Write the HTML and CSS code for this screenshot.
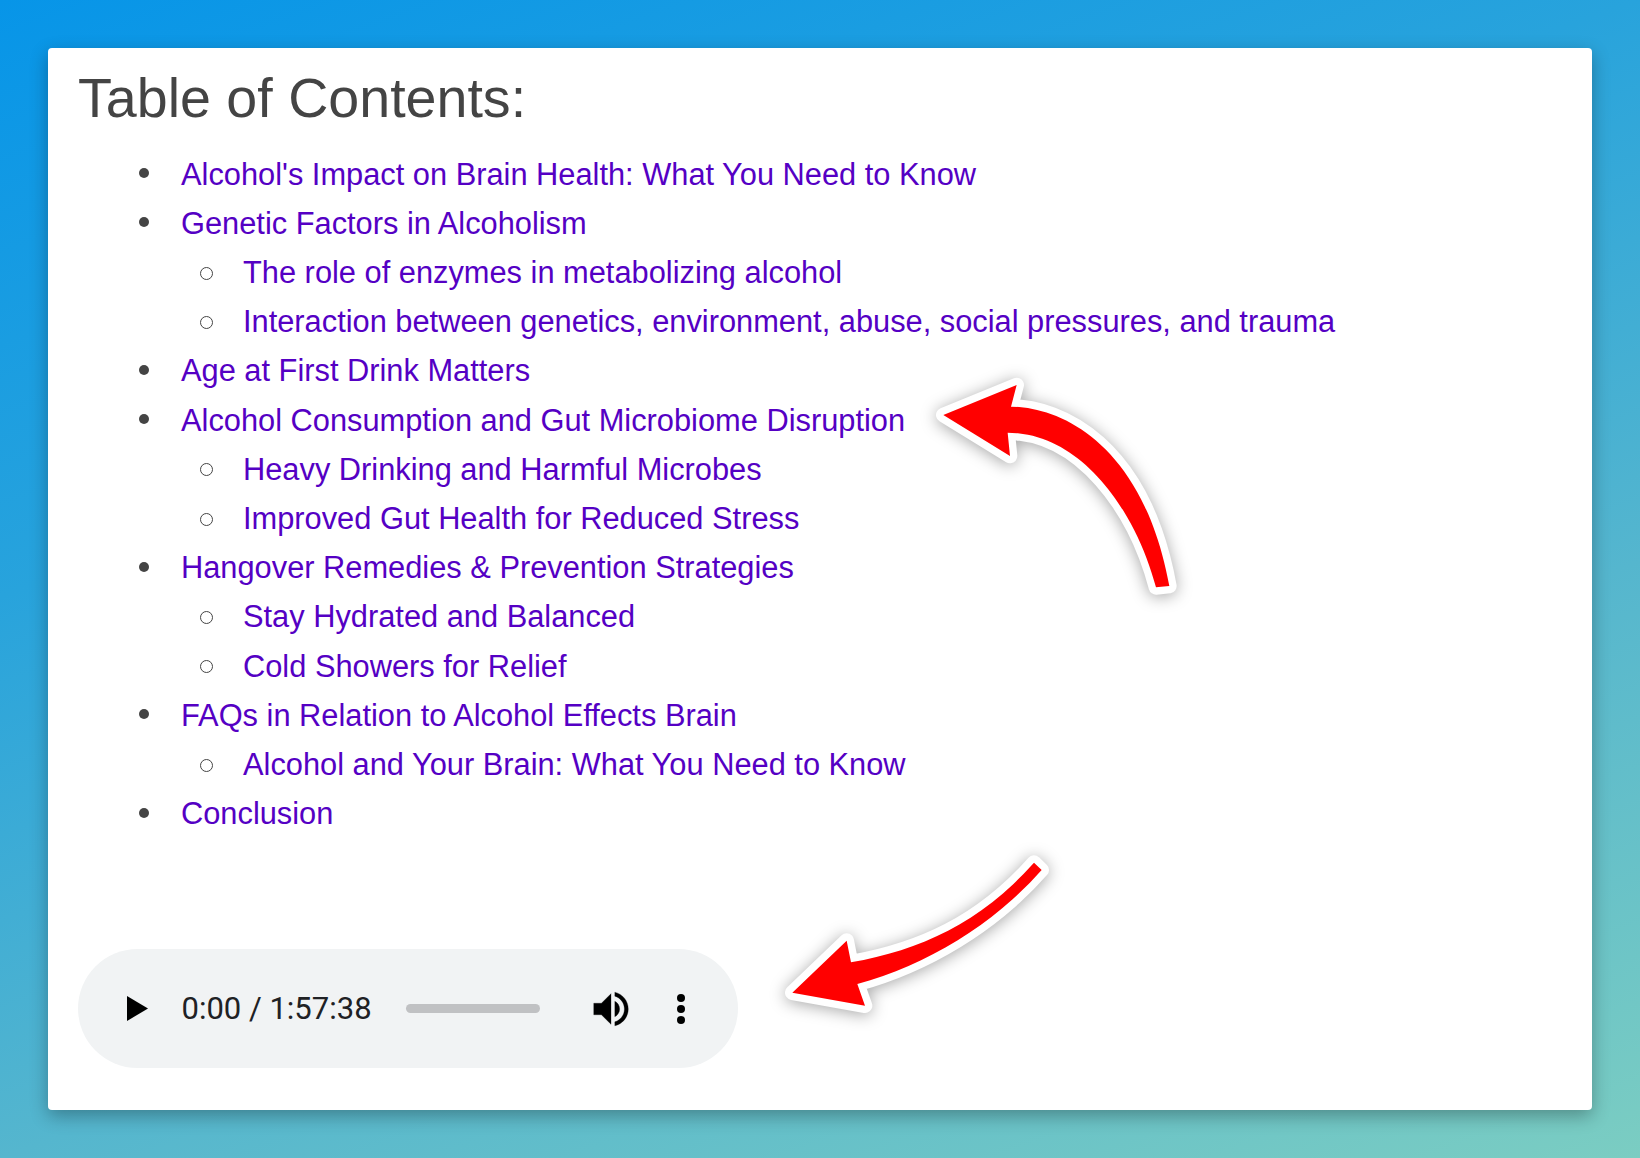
FILE: index.html
```html
<!DOCTYPE html>
<html lang="en">
<head>
<meta charset="utf-8">
<title>Table of Contents</title>
<link rel="stylesheet" href="styles.css">
</head>
<body>
<main class="card">
  <h2 class="title">Table of Contents:</h2>
  <ul class="toc">
    <li><a href="#a">Alcohol's Impact on Brain Health: What You Need to Know</a></li>
    <li><a href="#b">Genetic Factors in Alcoholism</a>
      <ul>
        <li><a href="#c">The role of enzymes in metabolizing alcohol</a></li>
        <li><a href="#d">Interaction between genetics, environment, abuse, social pressures, and trauma</a></li>
      </ul>
    </li>
    <li><a href="#e">Age at First Drink Matters</a></li>
    <li><a href="#f">Alcohol Consumption and Gut Microbiome Disruption</a>
      <ul>
        <li><a href="#g">Heavy Drinking and Harmful Microbes</a></li>
        <li><a href="#h">Improved Gut Health for Reduced Stress</a></li>
      </ul>
    </li>
    <li><a href="#i">Hangover Remedies &amp; Prevention Strategies</a>
      <ul>
        <li><a href="#j">Stay Hydrated and Balanced</a></li>
        <li><a href="#k">Cold Showers for Relief</a></li>
      </ul>
    </li>
    <li><a href="#l">FAQs in Relation to Alcohol Effects Brain</a>
      <ul>
        <li><a href="#m">Alcohol and Your Brain: What You Need to Know</a></li>
      </ul>
    </li>
    <li><a href="#n">Conclusion</a></li>
  </ul>
  <div class="player">
    <svg class="play" viewBox="0 0 21 25"><path d="M0 0L21 12.5L0 25Z"/></svg>
    <span class="time">0:00 / 1:57:38</span>
    <span class="track"></span>
    <svg class="volume" viewBox="0 0 24 24"><path d="M3 9v6h4l5 5V4L7 9H3zm13.5 3c0-1.77-1.02-3.29-2.5-4.03v8.05c1.48-.73 2.5-2.25 2.5-4.02zM14 3.23v2.06c2.89.86 5 3.54 5 6.71s-2.11 5.85-5 6.71v2.06c4.01-.91 7-4.49 7-8.77s-2.99-7.86-7-8.77z"/></svg>
    <svg class="more" viewBox="0 0 8 30"><circle cx="4" cy="4" r="4"/><circle cx="4" cy="15" r="4"/><circle cx="4" cy="26" r="4"/></svg>
  </div>
  <svg class="arrow arrow-up" viewBox="0 0 960 840"><path d="M130 195L350 105L333 170C480 170 730 280 808 708L768 712C705 475 540 248 323 248L330 318Z"/></svg>
  <svg class="arrow arrow-down" viewBox="0 0 960 600"><path d="M97 458L260 302L273 367C480 330 660 250 822 68L845 90C700 255 500 375 292 432L315 497Z"/></svg>
</main>
</body>
</html>
```
FILE: styles.css
```css
* { box-sizing: border-box; }
html, body { margin: 0; height: 100%; }
body {
  width: 1640px;
  height: 1158px;
  padding: 48px;
  overflow: hidden;
  background: linear-gradient(160deg, #0795e8 0%, #28a3dc 34%, #55b6ce 66%, #7bcdc2 100%);
  font-family: "Liberation Sans", Arial, sans-serif;
}
.card {
  position: relative;
  width: 1544px;
  height: 1062px;
  padding: 19px 30px 0;
  background: #fff;
  border-radius: 4px;
  box-shadow: 0 6px 18px rgba(0, 0, 0, 0.3);
}
.title {
  margin: 0;
  font-size: 55.6px;
  font-weight: 400;
  line-height: 62px;
  color: #444;
}
.toc {
  margin: 20.6px 0 0;
  padding: 0 0 0 103px;
  font-size: 30.8px;
  line-height: 49.2px;
  list-style: none;
}
.toc ul {
  margin: 0;
  padding: 0 0 0 62px;
  list-style: none;
}
.toc li { position: relative; }
.toc li::before {
  content: "";
  position: absolute;
  left: -42px;
  top: 18.5px;
  width: 10px;
  height: 10px;
  border-radius: 50%;
  background: #444;
}
.toc ul li::before {
  left: -43.5px;
  width: 11px;
  height: 11px;
  background: transparent;
  border: 1.3px solid #444;
}
.toc a { color: #5500c4; text-decoration: none; }
.player {
  position: absolute;
  left: 30px;
  top: 901px;
  width: 660px;
  height: 119px;
  display: flex;
  align-items: center;
  padding-left: 49px;
  background: #f1f3f4;
  border-radius: 59.5px;
}
.play { width: 21px; height: 25px; fill: #000; }
.time {
  margin-left: 33.5px;
  font-family: Roboto, "Liberation Sans", sans-serif;
  font-size: 31px;
  color: #202124;
  white-space: nowrap;
}
.track {
  width: 134px;
  height: 9px;
  margin-left: 34.5px;
  border-radius: 5px;
  background: #c0c1c3;
}
.volume { width: 46px; height: 46px; margin-left: 48px; fill: #000; stroke: #000; stroke-width: 0.15px; }
.more { width: 8px; height: 30px; margin-left: 43px; fill: #000; }
.arrow {
  position: absolute;
  overflow: visible;
  filter: drop-shadow(0 2px 8px rgba(0, 0, 0, 0.35));
}
.arrow path {
  fill: #f00;
  stroke: #fff;
  stroke-width: 44px;
  stroke-linejoin: round;
  paint-order: stroke;
}
.arrow-up { left: 852px; top: 302px; width: 320px; height: 280px; }
.arrow-down { left: 712px; top: 792px; width: 320px; height: 200px; }
```
